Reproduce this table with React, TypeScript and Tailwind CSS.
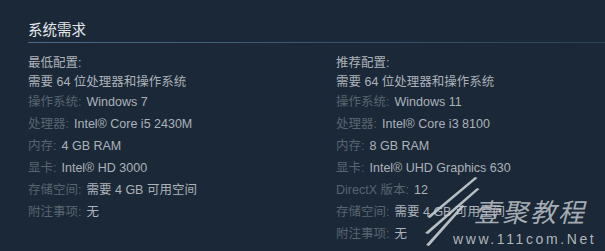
const minimum = [
  { label: "操作系统:", value: "Windows 7" },
  { label: "处理器:", value: "Intel® Core i5 2430M" },
  { label: "内存:", value: "4 GB RAM" },
  { label: "显卡:", value: "Intel® HD 3000" },
  { label: "存储空间:", value: "需要 4 GB 可用空间" },
  { label: "附注事项:", value: "无" },
];

const recommended = [
  { label: "操作系统:", value: "Windows 11" },
  { label: "处理器:", value: "Intel® Core i3 8100" },
  { label: "内存:", value: "8 GB RAM" },
  { label: "显卡:", value: "Intel® UHD Graphics 630" },
  { label: "DirectX 版本:", value: "12" },
  { label: "存储空间:", value: "需要 4 GB 可用空间" },
  { label: "附注事项:", value: "无" },
];

type Row = { label: string; value: string };

function Column({ title, rows }: { title: string; rows: Row[] }) {
  return (
    <div>
      <div className="h-[19px] leading-[19px] text-[#acb2b8]">{title}</div>
      <div className="h-[18px] leading-[18px] text-[#acb2b8] whitespace-nowrap">需要 64 位处理器和操作系统</div>
      <ul>
        {rows.map((r) => (
          <li key={r.label} className="h-[22px] leading-[22px] whitespace-nowrap">
            <span className="text-[#56656f]">{r.label}</span>
            <span className="ml-[5px] text-[#acb2b8]">{r.value}</span>
          </li>
        ))}
      </ul>
    </div>
  );
}

export default function App() {
  return (
    <div
      className="relative w-[605px] h-[251px] overflow-hidden bg-[#1b2838] text-[12.5px]"
      style={{ fontFamily: '"Liberation Sans", "Noto Sans CJK SC", sans-serif' }}
    >
      <div className="pl-[28px] pt-[20px]">
        <h2 className="h-[22px] leading-[20px] text-[14.5px] text-[#e4e8eb]">系统需求</h2>
        <div className="h-px bg-gradient-to-r from-[#4a6a85] to-[#2c4458]" />
        <div className="grid grid-cols-[308px_1fr] pt-[11px]">
          <Column title="最低配置:" rows={minimum} />
          <Column title="推荐配置:" rows={recommended} />
        </div>
      </div>

      {/* watermark */}
      <div className="absolute left-[420px] top-[174px] w-[185px] h-[77px] pointer-events-none">
        <svg className="absolute left-0 top-0" width="70" height="77" viewBox="0 0 70 77">
          <path d="M55 3 L57.5 4 L10 44 L7 43 Z" fill="#c9ced3" fillOpacity="0.9" />
          <path d="M57 14 L59.5 15 L8 60 L5 59 Z" fill="#c9ced3" fillOpacity="0.9" />
          <path d="M42 31 L44.5 32 L9 72 L6 71 Z" fill="#c9ced3" fillOpacity="0.9" />
        </svg>
        <div
          className="absolute left-[54px] top-[22px] text-[26px] leading-[30px] italic text-[#cdd2d6]/80 tracking-[2px]"
          style={{ fontFamily: '"Noto Sans CJK SC", sans-serif' }}
        >
          壹聚教程
        </div>
        <div className="absolute left-[33px] top-[56px] text-[14px] leading-[18px] tracking-[2.6px] text-[#cdd2d6]/85">
          www.111com.Net
        </div>
      </div>
    </div>
  );
}
